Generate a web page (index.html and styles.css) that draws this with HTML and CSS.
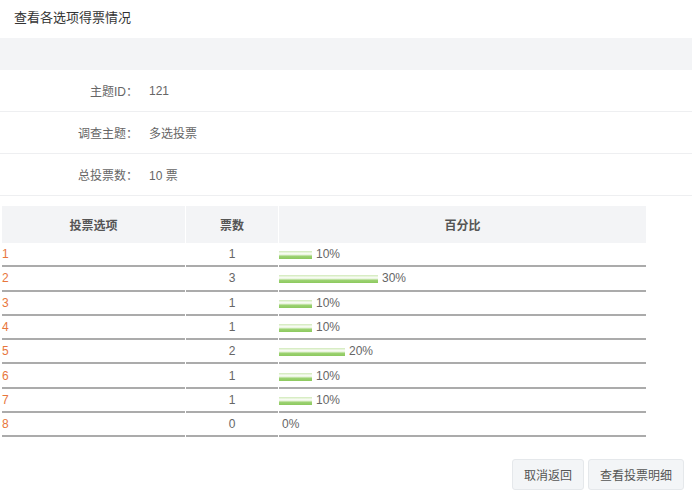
FILE: index.html
```html
<!DOCTYPE html>
<html lang="zh-CN">
<head>
  <meta charset="UTF-8">
  <title>查看各选项得票情况</title>
  <link rel="stylesheet" href="styles.css">
</head>
<body>

  <div class="title">查看各选项得票情况</div>
  <div class="toolbar"></div>

  <!-- topic info -->
  <div class="info">
    <div class="info-row"><span class="label">主题ID：</span><span class="value">121</span></div>
    <div class="info-row"><span class="label">调查主题：</span><span class="value">多选投票</span></div>
    <div class="info-row"><span class="label">总投票数：</span><span class="value">10 票</span></div>
  </div>

  <!-- result table -->
  <table class="result">
    <thead>
      <tr>
        <th class="col-name">投票选项</th>
        <th class="col-num">票数</th>
        <th class="col-pct">百分比</th>
      </tr>
    </thead>
    <tbody>
      <tr><td class="opt">1</td><td class="num">1</td><td><span class="bar" style="width:33px"></span>10%</td></tr>
      <tr><td class="opt">2</td><td class="num">3</td><td><span class="bar" style="width:99px"></span>30%</td></tr>
      <tr><td class="opt">3</td><td class="num">1</td><td><span class="bar" style="width:33px"></span>10%</td></tr>
      <tr><td class="opt">4</td><td class="num">1</td><td><span class="bar" style="width:33px"></span>10%</td></tr>
      <tr><td class="opt">5</td><td class="num">2</td><td><span class="bar" style="width:66px"></span>20%</td></tr>
      <tr><td class="opt">6</td><td class="num">1</td><td><span class="bar" style="width:33px"></span>10%</td></tr>
      <tr><td class="opt">7</td><td class="num">1</td><td><span class="bar" style="width:33px"></span>10%</td></tr>
      <tr><td class="opt">8</td><td class="num">0</td><td><span class="zero">0%</span></td></tr>
    </tbody>
  </table>

  <div class="actions">
    <button class="btn">取消返回</button>
    <button class="btn">查看投票明细</button>
  </div>

</body>
</html>
```

FILE: styles.css
```css
body {
  margin: 0;
  font-family: "Liberation Sans", "Noto Sans CJK SC", sans-serif;
  font-size: 12px;
  color: #555;
  background: #fff;
}

.title {
  height: 38px;
  line-height: 36px;
  padding-left: 14px;
  font-size: 13px;
  color: #333;
}

.toolbar {
  height: 32px;
  background: #f3f4f6;
}

.info-row {
  display: flex;
  align-items: center;
  height: 41px;
  border-bottom: 1px solid #eeeff1;
}

.label {
  width: 138px;
  text-align: right;
  color: #666;
  font-family: "Liberation Sans", "Noto Sans CJK TC", sans-serif;
}

.value {
  padding-left: 11px;
  color: #666;
}

.result {
  margin: 10px 0 0 1px;
  border-collapse: separate;
  border-spacing: 1px 0;
}

.result th {
  height: 37px;
  padding: 0;
  background: #f3f4f6;
  font-weight: bold;
  color: #555;
}

.col-name { width: 183px; }
.col-num { width: 92px; }
.col-pct { width: 367px; }

.result td {
  height: 22.3px;
  padding: 0;
  border-bottom: 2px solid #ababab;
  color: #666;
  white-space: nowrap;
}

.result td.opt {
  color: #e8763c;
}

.result td.num {
  text-align: center;
}

.bar {
  display: inline-block;
  height: 8px;
  margin-right: 4px;
  vertical-align: -1px;
  background: linear-gradient(to bottom, #d8edc4 0%, #d8edc4 12%, #f7fbf2 25%, #f7fbf2 40%, #d3ebbd 52%, #9dd273 64%, #8cc95e 100%);
}

.zero {
  padding-left: 3px;
}

.actions {
  display: flex;
  justify-content: flex-end;
  gap: 4px;
  margin-top: 22px;
  padding-right: 8px;
}

.btn {
  height: 31px;
  padding: 0 11px;
  font-family: "Liberation Sans", "Noto Sans CJK SC", sans-serif;
  font-size: 12px;
  color: #555;
  background: #f3f5f7;
  border: 1px solid #e5e8eb;
  border-radius: 3px;
}
```
